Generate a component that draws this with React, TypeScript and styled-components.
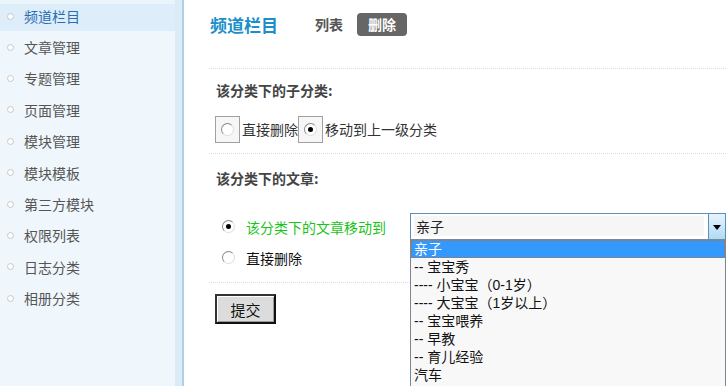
import React from 'react';
import styled, { createGlobalStyle } from 'styled-components';

const GlobalStyle = createGlobalStyle`
  html, body {
    margin: 0;
    padding: 0;
    background: #ffffff;
    font-family: "Noto Sans CJK SC", "Noto Sans", sans-serif;
    font-size: 14px;
    color: #333;
  }
`;

const Page = styled.div`
  display: flex;
  width: 726px;
  height: 386px;
  overflow: hidden;
`;

const Sidebar = styled.ul`
  width: 175px;
  flex-shrink: 0;
  margin: 0;
  padding: 0;
  list-style: none;
  background: #f0f7fc;
`;

const NavItem = styled.li<{ $active?: boolean }>`
  box-sizing: border-box;
  display: flex;
  align-items: center;
  height: 31.4px;
  padding-left: 5px;
  gap: 10px;
  background: ${p => (p.$active ? '#ddedf9' : 'transparent')};
  box-shadow: ${p => (p.$active ? 'inset 0 4px 0 #eaf4fb' : 'none')};
  color: ${p => (p.$active ? '#2a6db3' : '#555')};
  font-size: 14px;
  padding-top: ${p => (p.$active ? '1px' : '0')};
`;

const Bullet = styled.span`
  width: 5px;
  height: 5px;
  border-radius: 50%;
  border: 1px solid #c8c8c8;
  background: #fff;
  margin-left: 2px;
`;

const Gutter = styled.div`
  width: 7px;
  flex-shrink: 0;
  background: #dcebf8;
  border-right: 2px solid #aed0e2;
`;

const Main = styled.div`
  position: relative;
  flex: 1;
  padding-left: 25px;
  display: flex;
  flex-direction: column;
`;

const Header = styled.div`
  height: 50px;
  display: flex;
  align-items: center;
  padding-bottom: 2px;
  box-sizing: border-box;
`;

const PageTitle = styled.h2`
  margin: 0 0 0 1px;
  font-size: 17px;
  font-weight: bold;
  color: #1b8fca;
  width: 105px;
`;

const Tab = styled.span<{ $current?: boolean }>`
  display: inline-flex;
  align-items: center;
  justify-content: center;
  height: 23px;
  padding: 0 ${p => (p.$current ? '11px' : '0')};
  margin-right: 14px;
  border-radius: 4px;
  font-weight: bold;
  font-size: 14px;
  background: ${p => (p.$current ? '#666' : 'transparent')};
  color: ${p => (p.$current ? '#fff' : '#555')};
`;

const Rule = styled.div<{ $top: number }>`
  margin-top: ${p => p.$top}px;
  border-top: 1px dotted #c9e0f0;
`;

const SectionTitle = styled.h3<{ $top: number }>`
  margin: ${p => p.$top}px 0 0 7px;
  height: 20px;
  line-height: 20px;
  font-size: 14px;
  font-weight: bold;
  color: #444;
`;

const BoxedRow = styled.div`
  margin: 16px 0 0 6px;
  display: flex;
  align-items: center;
  height: 26px;
  font-size: 14px;
  color: #333;
`;

const RadioBox = styled.span`
  width: 23px;
  height: 25px;
  border: 1px solid #a0a0a0;
  background: #f6f6f6;
  display: flex;
  align-items: center;
  justify-content: center;
  margin-right: 2px;
`;

const RadioDot = styled.span<{ $checked?: boolean }>`
  position: relative;
  width: 11px;
  height: 11px;
  border-radius: 50%;
  border: 1px solid #8a8a8a;
  border-right-color: #ddd;
  border-bottom-color: #ddd;
  background: #fff;
  flex-shrink: 0;
  &::after {
    content: '';
    display: ${p => (p.$checked ? 'block' : 'none')};
    position: absolute;
    left: 3px;
    top: 3px;
    width: 5px;
    height: 5px;
    border-radius: 50%;
    background: #000;
  }
`;

const MoveRow = styled.div<{ $top: number }>`
  margin: ${p => p.$top}px 0 0 13px;
  display: flex;
  align-items: center;
  height: 27px;
`;

const RowLabel = styled.span<{ $green?: boolean }>`
  width: 164px;
  margin-left: 11px;
  font-size: 14px;
  color: ${p => (p.$green ? '#19c419' : '#111')};
`;

const Select = styled.div`
  flex: 1;
  height: 27px;
  box-sizing: border-box;
  border: 1px solid #5b8fb8;
  display: flex;
  background: #fff;
`;

const SelectValue = styled.div`
  flex: 1;
  margin: 2px 4px 3px 3px;
  background: #f6f6f6;
  padding-left: 2px;
  line-height: 20px;
  font-size: 14px;
  color: #222;
`;

const SelectArrow = styled.div`
  width: 16px;
  border-left: 1px solid #5b8fb8;
  background: linear-gradient(#e8f4fc, #aedbf5);
  display: flex;
  align-items: center;
  justify-content: center;
  padding-top: 2px;
`;

const Options = styled.ul`
  position: absolute;
  left: 226px;
  top: 239px;
  right: 0;
  margin: 0;
  padding: 0 0 2px;
  list-style: none;
  border: 1px solid #7b8794;
  background: #f8f8f8;
  font-family: "Liberation Sans", "Noto Sans CJK SC", sans-serif;
`;

const Option = styled.li<{ $selected?: boolean }>`
  height: 18px;
  line-height: 18px;
  padding-left: 3px;
  font-size: 14px;
  white-space: pre;
  overflow: hidden;
  color: ${p => (p.$selected ? '#fff' : '#111')};
  background: ${p => (p.$selected ? '#3399ff' : 'transparent')};
  outline: ${p => (p.$selected ? '1px dotted #c0702a' : 'none')};
  outline-offset: -1px;
`;

const SubmitButton = styled.button`
  margin: 11px 0 0 6px;
  width: 61px;
  height: 30px;
  background: #dcdcdc;
  border: 2px solid #111;
  border-top-color: #333;
  border-left-color: #333;
  box-shadow: inset 1px 1px 0 #fff, inset -1px -1px 0 #999;
  font-family: "Noto Sans CJK SC", sans-serif;
  font-size: 15px;
  color: #111;
  padding: 0;
`;

const navItems = ['频道栏目', '文章管理', '专题管理', '页面管理', '模块管理', '模块模板', '第三方模块', '权限列表', '日志分类', '相册分类'];

const options = ['亲子', '-- 宝宝秀', '---- 小宝宝（0-1岁）', '---- 大宝宝（1岁以上）', '-- 宝宝喂养', '-- 早教', '-- 育儿经验', '汽车'];

const App = () => (
  <>
    <GlobalStyle />
    <Page>
      <Sidebar>
        {navItems.map((item, i) => (
          <NavItem key={item} $active={i === 0}>
            <Bullet />
            {item}
          </NavItem>
        ))}
      </Sidebar>
      <Gutter />
      <Main>
        <Header>
          <PageTitle>频道栏目</PageTitle>
          <Tab>列表</Tab>
          <Tab $current>删除</Tab>
        </Header>
        <Rule $top={18} />
        <SectionTitle $top={11}>该分类下的子分类:</SectionTitle>
        <BoxedRow>
          <RadioBox><RadioDot /></RadioBox>
          直接删除
          <RadioBox><RadioDot $checked /></RadioBox>
          移动到上一级分类
        </BoxedRow>
        <Rule $top={11} />
        <SectionTitle $top={14}>该分类下的文章:</SectionTitle>
        <MoveRow $top={25}>
          <RadioDot $checked />
          <RowLabel $green>该分类下的文章移动到</RowLabel>
          <Select>
            <SelectValue>亲子</SelectValue>
            <SelectArrow>
              <svg width="8" height="5" viewBox="0 0 8 5">
                <path d="M0 0h8L4 5z" fill="#000" />
              </svg>
            </SelectArrow>
          </Select>
        </MoveRow>
        <MoveRow $top={4}>
          <RadioDot />
          <RowLabel>直接删除</RowLabel>
        </MoveRow>
        <Rule $top={11} />
        <div>
          <SubmitButton>提交</SubmitButton>
        </div>
        <Options>
          {options.map((o, i) => (
            <Option key={o} $selected={i === 0}>{o}</Option>
          ))}
        </Options>
      </Main>
    </Page>
  </>
);

export default App;
